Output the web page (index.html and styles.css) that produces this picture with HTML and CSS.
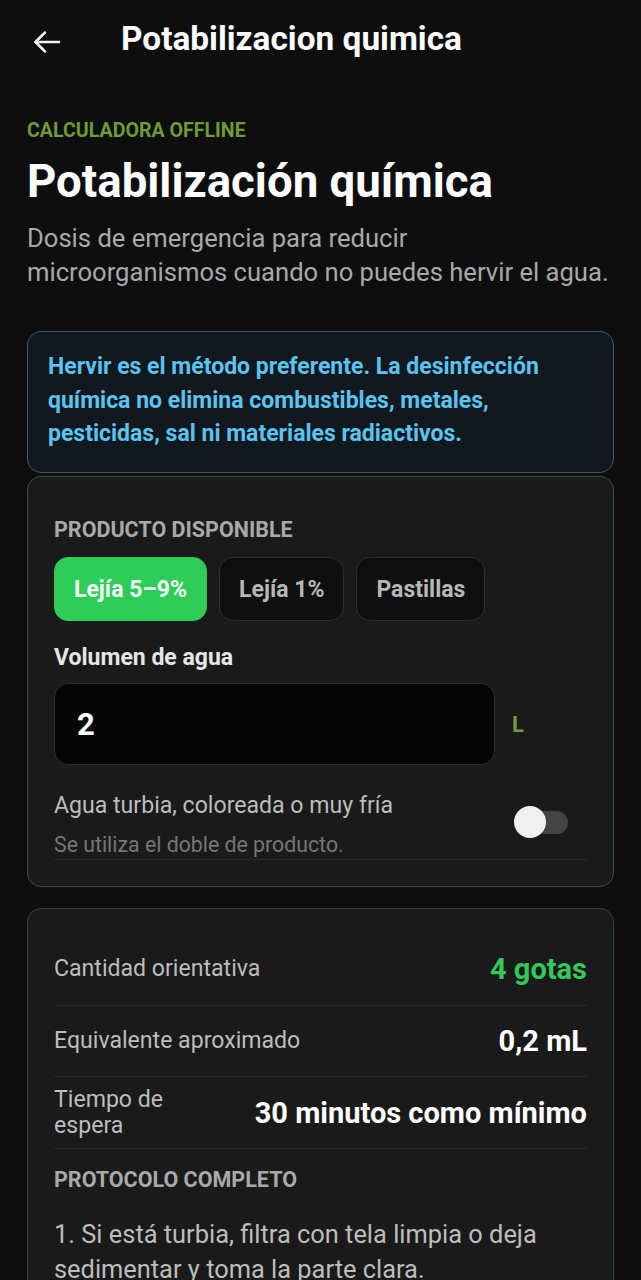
FILE: index.html
```html
<!DOCTYPE html>
<html lang="es">
<head>
<meta charset="utf-8">
<title>Potabilizacion quimica</title>
<link rel="stylesheet" href="styles.css">
</head>
<body>
<header class="topbar">
  <button class="back" aria-label="Volver">
    <svg width="28" height="22" viewBox="0 0 28 22" fill="none" stroke="#f2f2f2" stroke-width="2.5" stroke-linecap="round" stroke-linejoin="round"><path d="M26 11H2.5"/><path d="M12 1.5L2.5 11l9.5 9.5"/></svg>
  </button>
  <h1 class="topbar-title">Potabilizacion quimica</h1>
</header>

<main class="page">
  <p class="eyebrow">CALCULADORA OFFLINE</p>
  <h2 class="heading">Potabilización química</h2>
  <p class="subtitle">Dosis de emergencia para reducir microorganismos cuando no puedes hervir el agua.</p>

  <div class="notice">Hervir es el método preferente. La desinfección química no elimina combustibles, metales, pesticidas, sal ni materiales radiactivos.</div>

  <section class="card form-card">
    <p class="section-label">PRODUCTO DISPONIBLE</p>
    <div class="chips">
      <button class="chip chip-active">Lejía 5–9%</button>
      <button class="chip">Lejía 1%</button>
      <button class="chip">Pastillas</button>
    </div>
    <label class="field-label" for="vol">Volumen de agua</label>
    <div class="input-row">
      <input id="vol" class="vol-input" type="text" value="2">
      <span class="unit">L</span>
    </div>
    <div class="toggle-row">
      <div class="toggle-text">
        <p class="toggle-title">Agua turbia, coloreada o muy fría</p>
        <p class="toggle-sub">Se utiliza el doble de producto.</p>
      </div>
      <span class="switch"><span class="switch-track"></span><span class="switch-thumb"></span></span>
    </div>
  </section>

  <section class="card result-card">
    <div class="row">
      <span class="row-label">Cantidad orientativa</span>
      <span class="row-value accent">4 gotas</span>
    </div>
    <div class="row">
      <span class="row-label">Equivalente aproximado</span>
      <span class="row-value">0,2 mL</span>
    </div>
    <div class="row">
      <span class="row-label">Tiempo de espera</span>
      <span class="row-value">30 minutos como mínimo</span>
    </div>
    <p class="section-label protocol-label">PROTOCOLO COMPLETO</p>
    <p class="protocol">1. Si está turbia, filtra con tela limpia o deja sedimentar y toma la parte clara.</p>
  </section>
</main>
</body>
</html>
```

FILE: styles.css
```css
* { box-sizing: border-box; }
html, body {
  margin: 0;
  padding: 0;
  background: #0e0e0e;
  font-family: Roboto, "Noto Sans", "Liberation Sans", sans-serif;
  color: #f2f2f2;
}
p, h1, h2 { margin: 0; }

.topbar {
  height: 78px;
  display: flex;
  align-items: center;
  padding-left: 33px;
}
.back {
  background: none;
  border: 0;
  padding: 0;
  margin-top: 5px;
  width: 28px;
  height: 22px;
  display: flex;
}
.topbar-title {
  margin-left: 60px;
  font-size: 33.4px;
  line-height: 40px;
  font-weight: 700;
  color: #ffffff;
}

.page {
  padding: 0 27px;
}
.eyebrow {
  margin-top: 41px;
  font-size: 19.6px;
  line-height: 24px;
  font-weight: 700;
  color: #6b9b3b;
}
.heading {
  margin-top: 13px;
  font-size: 45.6px;
  line-height: 52px;
  font-weight: 700;
  color: #ffffff;
}
.subtitle {
  margin-top: 13px;
  padding-right: 4px;
  font-size: 25.6px;
  line-height: 34px;
  color: #a9a9a9;
}

.notice {
  margin-top: 42px;
  background: #11191e;
  border: 1.5px solid #3b5c6c;
  border-radius: 14px;
  padding: 18px 20px 21px;
  font-size: 23px;
  line-height: 33.5px;
  font-weight: 700;
  color: #5cc3f0;
}

.card {
  background: #1a1a1a;
  border: 1.5px solid #2e5a2f;
  border-radius: 14px;
  padding: 0 26px;
}
.form-card {
  margin-top: 3px;
  padding-top: 40px;
  padding-bottom: 26px;
}
.section-label {
  font-size: 21.5px;
  line-height: 26px;
  font-weight: 700;
  color: #a9a9a9;
}
.chips {
  margin-top: 14.5px;
  display: flex;
  gap: 12px;
}
.chip {
  height: 64px;
  padding: 0 19px;
  border-radius: 14px;
  border: 1.5px solid #2e2e2e;
  background: #0f0f0f;
  color: #b8b8b8;
  font-family: inherit;
  font-size: 23px;
  font-weight: 700;
}
.chip-active {
  background: #2fcc5a;
  border-color: #2fcc5a;
  color: #f4fff6;
}
.field-label {
  display: block;
  margin-top: 24px;
  font-size: 23px;
  line-height: 26px;
  font-weight: 700;
  color: #e6e6e6;
}
.input-row {
  margin-top: 12px;
  display: flex;
  align-items: center;
  gap: 17px;
}
.vol-input {
  width: 441px;
  height: 82px;
  background: #050505;
  border: 1.5px solid #2f2f2f;
  border-radius: 14px;
  padding: 0 22px;
  color: #ffffff;
  font-family: inherit;
  font-size: 31px;
  font-weight: 700;
  outline: none;
}
.unit {
  font-size: 22px;
  font-weight: 700;
  color: #6b9b3b;
}
.toggle-row {
  margin-top: 27px;
  display: flex;
  align-items: center;
  justify-content: space-between;
  border-bottom: 1.5px solid #2b2b2b;
  padding-bottom: 2px;
}
.toggle-title {
  font-size: 23.1px;
  line-height: 28px;
  color: #bdbdbd;
}
.toggle-sub {
  margin-top: 12.5px;
  font-size: 21.3px;
  line-height: 24px;
  color: #767676;
}
.switch {
  position: relative;
  width: 56px;
  height: 32px;
  margin-right: 17px;
  margin-bottom: 4px;
  flex: none;
}
.switch-track {
  position: absolute;
  left: 14px;
  top: 5px;
  width: 40px;
  height: 23px;
  border-radius: 12px;
  background: #444444;
}
.switch-thumb {
  position: absolute;
  left: 0;
  top: 0;
  width: 32px;
  height: 32px;
  border-radius: 50%;
  background: #f0f0f0;
}

.result-card {
  margin-top: 21.5px;
  padding-top: 25px;
  padding-bottom: 30px;
  border-color: #27502b;
}
.row {
  min-height: 71.7px;
  display: flex;
  align-items: center;
  justify-content: space-between;
  gap: 34px;
  border-bottom: 1.5px solid #2b2b2b;
  padding: 8px 0;
}
.row-label {
  font-size: 23.1px;
  line-height: 26px;
  color: #bdbdbd;
}
.row-value {
  font-size: 29px;
  line-height: 34px;
  font-weight: 700;
  color: #ffffff;
  text-align: right;
  flex: none;
}
.row-value.accent { color: #34c759; }
.protocol-label {
  margin-top: 18px;
}
.protocol {
  margin-top: 24px;
  font-size: 25.4px;
  line-height: 35px;
  color: #bdbdbd;
}
```
